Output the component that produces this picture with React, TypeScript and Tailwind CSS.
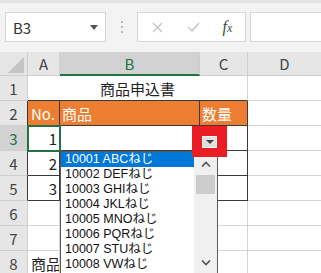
import React from 'react';

const FONT = { fontFamily: '"Noto Sans CJK JP", "Noto Sans", sans-serif' };
const LIST_FONT = { fontFamily: '"Liberation Sans", "Noto Sans CJK JP", sans-serif' };

const items = [
    '10001 ABCねじ',
    '10002 DEFねじ',
    '10003 GHIねじ',
    '10004 JKLねじ',
    '10005 MNOねじ',
    '10006 PQRねじ',
    '10007 STUねじ',
    '10008 VWねじ',
];

const RowHead: React.FC<{ n: number; active?: boolean }> = ({ n, active }) => (
    <div
        className={`w-[28px] h-[25px] shrink-0 flex items-center justify-center border-r border-b border-[#cfcfcf] text-[15px] leading-none ${
            active ? 'bg-[#d2d2d2] text-[#217346]' : 'bg-[#e6e6e6] text-[#444]'
        }`}
    >
        {n}
    </div>
);

export default function App() {
    return (
        <div className="relative w-[321px] h-[273px] overflow-hidden bg-white" style={FONT}>
            {/* Formula bar */}
            <div className="h-[52px] bg-[#f3f3f3] border-t-[3px] border-[#e3e3e3] flex items-start pt-[9px]">
                <div className="ml-[5px] w-[101px] h-[30px] bg-white border border-[#d6d6d6] flex items-center justify-between pl-[7px] pr-[7px]">
                    <span className="text-[15px] text-[#333] leading-none">B3</span>
                    <svg width="8" height="5" viewBox="0 0 8 5"><path d="M0 0h8L4 5z" fill="#555" /></svg>
                </div>
                <div className="w-[31px] h-[30px] flex flex-col items-center justify-center gap-[3px]">
                    <span className="w-[2px] h-[2px] bg-[#b8b8b8]" />
                    <span className="w-[2px] h-[2px] bg-[#b8b8b8]" />
                    <span className="w-[2px] h-[2px] bg-[#b8b8b8]" />
                </div>
                <div className="w-[109px] h-[30px] bg-white border border-[#d6d6d6] flex items-center">
                    <div className="w-[38px] flex justify-center">
                        <svg width="11" height="11" viewBox="0 0 11 11"><path d="M1 1l9 9M10 1l-9 9" stroke="#c4c4c4" strokeWidth="1.3" /></svg>
                    </div>
                    <div className="w-[34px] flex justify-center">
                        <svg width="13" height="10" viewBox="0 0 13 10"><path d="M1 5l4 4 7-8" stroke="#c4c4c4" strokeWidth="1.4" fill="none" /></svg>
                    </div>
                    <div className="flex-1 flex justify-center">
                        <span className="italic text-[16px] text-[#444] leading-none" style={{ fontFamily: '"Liberation Serif", serif' }}>
                            f<span className="text-[12px]">x</span>
                        </span>
                    </div>
                </div>
                <div className="ml-[4px] flex-1 h-[30px] bg-white border border-[#d6d6d6] border-r-0" />
            </div>

            {/* Column headers */}
            <div className="flex h-[24px] bg-[#e6e6e6] text-[15px] leading-none text-[#444]">
                <div className="w-[28px] h-full shrink-0 border-r border-b border-[#cfcfcf] relative">
                    <svg className="absolute left-[8px] top-[5px]" width="16" height="16" viewBox="0 0 16 16"><path d="M16 0V16H0z" fill="#c4c4c4" /></svg>
                </div>
                <div className="w-[32px] shrink-0 flex items-center justify-center border-r border-b border-[#cfcfcf]">A</div>
                <div className="w-[140px] shrink-0 flex items-center justify-center bg-[#d2d2d2] text-[#217346] border-r border-[#cfcfcf] border-b-2 border-b-[#217346]">B</div>
                <div className="w-[48px] shrink-0 flex items-center justify-center border-r border-b border-[#cfcfcf]">C</div>
                <div className="flex-1 flex items-center justify-center border-b border-[#cfcfcf]">D</div>
            </div>

            {/* Row 1 */}
            <div className="flex">
                <RowHead n={1} />
                <div className="w-[220px] h-[25px] shrink-0 flex items-center justify-center border-r border-b border-r-[#d4d4d4] border-b-[#3a3a3a] text-[15px] text-[#222] leading-none">
                    商品申込書
                </div>
                <div className="flex-1 h-[25px] border-b border-[#d4d4d4]" />
            </div>

            {/* Row 2 */}
            <div className="flex">
                <div className="w-[28px] h-[25px] shrink-0 flex items-center justify-center border-r border-b border-b-[#cfcfcf] border-r-[#3a3a3a] bg-[#e6e6e6] text-[15px] leading-none text-[#444]">2</div>
                <div className="w-[32px] h-[25px] shrink-0 flex items-center pl-[3px] bg-[#ed7d31] text-white text-[15px] leading-none border-r border-b border-[#3a3a3a]">No.</div>
                <div className="w-[140px] h-[25px] shrink-0 flex items-center pl-[2px] bg-[#ed7d31] text-white text-[15px] leading-none border-r border-b border-[#3a3a3a]">商品</div>
                <div className="w-[48px] h-[25px] shrink-0 flex items-center pl-[2px] bg-[#ed7d31] text-white text-[15px] leading-none border-r border-b border-[#3a3a3a]">数量</div>
                <div className="flex-1 h-[25px] border-b border-[#d4d4d4]" />
            </div>

            {/* Rows 3-5 */}
            {[3, 4, 5].map((r) => (
                <div key={r} className="flex">
                    <div
                        className={`w-[28px] h-[25px] shrink-0 flex items-center justify-center border-r border-b border-b-[#cfcfcf] border-r-[#3a3a3a] text-[15px] leading-none ${
                            r === 3 ? 'bg-[#d2d2d2] text-[#217346]' : 'bg-[#e6e6e6] text-[#444]'
                        }`}
                    >
                        {r}
                    </div>
                    <div className="w-[32px] h-[25px] shrink-0 flex items-center justify-end pr-[2px] text-[15px] leading-none text-[#222] border-r border-b border-[#3a3a3a]">
                        {r - 2}
                    </div>
                    <div className="w-[140px] h-[25px] shrink-0 border-r border-b border-[#3a3a3a]" />
                    <div className="w-[48px] h-[25px] shrink-0 border-r border-b border-[#3a3a3a]" />
                    <div className="flex-1 h-[25px] border-b border-[#d4d4d4]" />
                </div>
            ))}

            {/* Rows 6-8 */}
            {[6, 7, 8].map((r) => (
                <div key={r} className="flex">
                    <RowHead n={r} />
                    <div className="w-[32px] h-[25px] shrink-0 flex items-center pl-[3px] text-[15px] leading-none text-[#222] border-r border-b border-[#d4d4d4] whitespace-nowrap overflow-hidden">
                        {r === 8 ? '商品' : ''}
                    </div>
                    <div className="w-[140px] h-[25px] shrink-0 border-r border-b border-[#d4d4d4]" />
                    <div className="w-[48px] h-[25px] shrink-0 border-r border-b border-[#d4d4d4]" />
                    <div className="flex-1 h-[25px] border-b border-[#d4d4d4]" />
                </div>
            ))}

            {/* Selection frame */}
            <div className="absolute left-[27px] top-[125px] w-[34px] h-[27px] border-2 border-[#217346]" />

            {/* Dropdown list */}
            <div className="absolute left-[60px] top-[151px] w-[158px] h-[130px] bg-white border border-[#5a5a5a] flex">
                <div className="w-[133px] flex flex-col" style={LIST_FONT}>
                    {items.map((it, i) => (
                        <div
                            key={it}
                            className={`h-[15px] shrink-0 flex items-center pl-[4px] text-[12.5px] leading-[15px] whitespace-nowrap ${
                                i === 0 ? 'bg-[#0078d7] text-white' : 'text-[#111]'
                            }`}
                        >
                            {it}
                        </div>
                    ))}
                </div>
                <div className="flex-1 bg-[#f0f0f0] flex flex-col items-center">
                    <div className="h-[22px] flex items-center justify-center mt-[1px]">
                        <svg width="10" height="6" viewBox="0 0 10 6"><path d="M1 5.5L5 1.5l4 4" stroke="#555" strokeWidth="1.6" fill="none" /></svg>
                    </div>
                    <div className="w-[19px] h-[19px] bg-[#cdcdcd]" />
                    <div className="flex-1" />
                    <div className="h-[20px] flex items-center justify-center mb-[7px]">
                        <svg width="10" height="6" viewBox="0 0 10 6"><path d="M1 0.5L5 4.5l4-4" stroke="#555" strokeWidth="1.6" fill="none" /></svg>
                    </div>
                </div>
            </div>

            {/* Red highlight with dropdown button */}
            <div className="absolute left-[192px] top-[126px] w-[35px] h-[31px] bg-[#ea1c24]">
                <div className="absolute left-[10px] top-[10px] w-[15px] h-[12px] bg-[#e0e0e0] border border-[#f4f4f4] flex items-center justify-center">
                    <svg width="8" height="4" viewBox="0 0 8 4"><path d="M0 0h8L4 4z" fill="#444" /></svg>
                </div>
            </div>
        </div>
    );
}
